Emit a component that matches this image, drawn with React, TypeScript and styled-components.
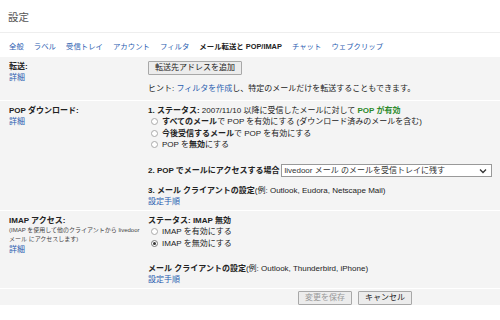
import React from 'react'
import styled, { createGlobalStyle } from 'styled-components'

const Global = createGlobalStyle`
    body {
        margin: 0;
        background: #fff;
    }
`;
const Page = styled.div`
    width: 500px;
    height: 320px;
    background: #fff;
    font-family: "Liberation Sans", "Noto Sans CJK JP", sans-serif;
    font-size: 8px;
    color: #222;
    overflow: hidden;
`;
const Header = styled.div`
    height: 32px;
    display: flex;
    align-items: center;
    padding-left: 8px;
    font-size: 10.5px;
    color: #555;
    border-bottom: 1px solid #eee;
`;
const Tabs = styled.div`
    display: flex;
    align-items: center;
    height: 24px;
    padding: 1px 0 0 9px;
    box-sizing: border-box;
    gap: 10px;
    font-size: 7.4px;
`;
const Tab = styled.span<{ active?: boolean }>`
    color: ${p => p.active ? '#222' : '#2a5db0'};
    font-weight: ${p => p.active ? 'bold' : 'normal'};
`;
const Panel = styled.div`
    background: #f4f4f4;
`;
const Row = styled.div<{ h: number }>`
    display: grid;
    grid-template-columns: 139px 1fr;
    height: ${p => p.h}px;
    padding: 4px 0 0 9px;
    box-sizing: border-box;
    border-bottom: 1px solid #fff;
    line-height: 11px;
`;
const Label = styled.div`
    display: flex;
    flex-direction: column;
`;
const Strong = styled.b`
    font-weight: bold;
    color: #222;
`;
const Link = styled.a`
    color: #2a5db0;
    text-decoration: none;
`;
const Small = styled.div`
    font-size: 6px;
    line-height: 9px;
    color: #444;
`;
const Body = styled.div`
    display: flex;
    flex-direction: column;
`;
const Line = styled.div<{ gap?: number }>`
    margin-top: ${p => p.gap || 0}px;
    white-space: nowrap;
`;
const Green = styled.b`
    color: #2b8a2b;
`;
const Button = styled.button<{ disabled?: boolean }>`
    font-family: inherit;
    font-size: 8px;
    height: 14px;
    line-height: 12px;
    padding: 0 6px;
    border: 1px solid #a8a8a8;
    background: #ececec;
    color: ${p => p.disabled ? '#999' : '#222'};
    align-self: flex-start;
    border-radius: 1px;
`;
const Radio = styled.label`
    display: flex;
    align-items: center;
    gap: 4px;
    padding-left: 3px;
    height: 11.5px;
    white-space: nowrap;
`;
const Dot = styled.span<{ checked?: boolean }>`
    width: 7px;
    height: 7px;
    border-radius: 50%;
    border: 1px solid ${p => p.checked ? '#777' : '#aaa'};
    background: #fff;
    box-sizing: border-box;
    display: flex;
    align-items: center;
    justify-content: center;
    &::after {
        content: '';
        width: 3px;
        height: 3px;
        border-radius: 50%;
        background: ${p => p.checked ? '#333' : 'transparent'};
    }
`;
const SelectRow = styled.div`
    display: flex;
    align-items: center;
    gap: 2px;
    margin-top: 13px;
    height: 14px;
`;
const Select = styled.div`
    width: 211px;
    height: 13px;
    box-sizing: border-box;
    border: 1px solid #999;
    background: #fff;
    display: flex;
    align-items: center;
    justify-content: space-between;
    padding: 0 4px 0 2px;
    color: #333;
`;
const Footer = styled.div`
    display: flex;
    gap: 6px;
    padding: 2px 0 0 298px;
    height: 16px;
    box-sizing: border-box;
`;

const App = () => {
    return (
        <Page>
            <Global />
            <Header>設定</Header>
            <Tabs>
                <Tab>全般</Tab>
                <Tab>ラベル</Tab>
                <Tab>受信トレイ</Tab>
                <Tab>アカウント</Tab>
                <Tab>フィルタ</Tab>
                <Tab active>メール転送と POP/IMAP</Tab>
                <Tab>チャット</Tab>
                <Tab>ウェブクリップ</Tab>
            </Tabs>
            <Panel>
                <Row h={44}>
                    <Label>
                        <Strong>転送:</Strong>
                        <Link>詳細</Link>
                    </Label>
                    <Body>
                        <Button>転送先アドレスを追加</Button>
                        <Line gap={8}>ヒント: <Link>フィルタを作成</Link>し、特定のメールだけを転送することもできます。</Line>
                    </Body>
                </Row>
                <Row h={110}>
                    <Label>
                        <Strong>POP ダウンロード:</Strong>
                        <Link>詳細</Link>
                    </Label>
                    <Body>
                        <Line><Strong>1. ステータス:</Strong> 2007/11/10 以降に受信したメールに対して <Green>POP が有効</Green></Line>
                        <Radio><Dot /><span><Strong>すべてのメール</Strong>で POP を有効にする (ダウンロード済みのメールを含む)</span></Radio>
                        <Radio><Dot /><span><Strong>今後受信するメール</Strong>で POP を有効にする</span></Radio>
                        <Radio><Dot /><span>POP を<Strong>無効</Strong>にする</span></Radio>
                        <SelectRow>
                            <Strong>2. POP でメールにアクセスする場合</Strong>
                            <Select>
                                <span>livedoor メール のメールを受信トレイに残す</span>
                                <svg width="8" height="6" viewBox="0 0 8 6">
                                    <path d="M1 1.5 L4 4.5 L7 1.5" fill="none" stroke="#333" strokeWidth="1.3" />
                                </svg>
                            </Select>
                        </SelectRow>
                        <Line gap={7}><Strong>3. メール クライアントの設定</Strong>(例: Outlook, Eudora, Netscape Mail)</Line>
                        <Link>設定手順</Link>
                    </Body>
                </Row>
                <Row h={78}>
                    <Label>
                        <Strong>IMAP アクセス:</Strong>
                        <Small>(IMAP を使用して他のクライアントから livedoor<br />メール にアクセスします)</Small>
                        <Link>詳細</Link>
                    </Label>
                    <Body>
                        <Line><Strong>ステータス: IMAP 無効</Strong></Line>
                        <Radio><Dot /><span>IMAP を有効にする</span></Radio>
                        <Radio><Dot checked /><span>IMAP を無効にする</span></Radio>
                        <Line gap={14}><Strong>メール クライアントの設定</Strong>(例: Outlook, Thunderbird, iPhone)</Line>
                        <Link>設定手順</Link>
                    </Body>
                </Row>
                <Footer>
                    <Button disabled>変更を保存</Button>
                    <Button>キャンセル</Button>
                </Footer>
            </Panel>
        </Page>
    )
}

export default App
